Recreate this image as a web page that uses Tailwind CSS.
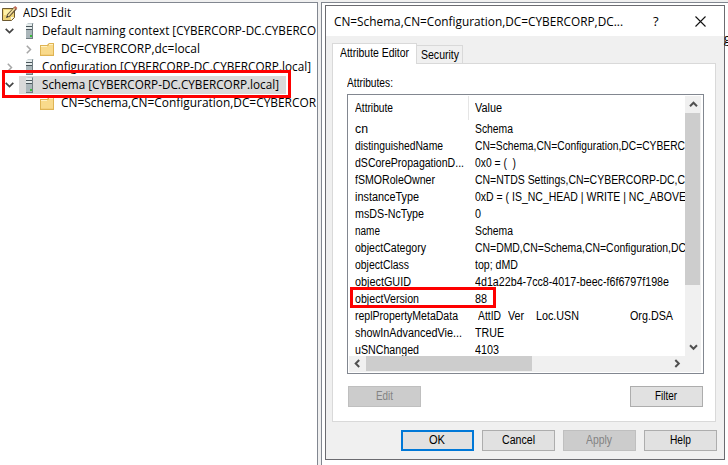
<!DOCTYPE html>
<html lang="en"><head><meta charset="utf-8"><title>ADSI Edit</title>
<script src="https://cdn.jsdelivr.net/npm/@tailwindcss/browser@4"></script></head>
<body class="w-[728px] h-[465px] overflow-hidden bg-[#f0f0f0] text-black relative font-['Liberation_Sans',sans-serif] text-[12px] leading-[17px]">
<svg class="hidden"><defs>
<symbol id="server" viewBox="0 0 10 16"><path fill="#c3cdd0" d="M1 2l2-2h6L8 1v14H1z"/><path fill="#aab6ba" d="M1 1h6v14H1z"/><path fill="#4b565b" d="M1 3h6v1H1zM1 6h6v1H1z"/><path fill="#e5ecec" d="M1 1h6v2H1zM1 4h6v2H1z"/><path fill="#717e83" d="M7 1l1-1v15H7zM1 15h7v1H1z"/><path fill="#37bd39" d="M5 12h2v2H5z"/></symbol>
<symbol id="folder" viewBox="0 0 14 13"><path fill="#dfb454" d="M0 2h7l2-2h5v13H0z"/><path fill="#f9da8b" d="M1 3h7l1-1h4v10H1z"/><path fill="#fff1c4" d="M9 1h4v1H9zM1 3h6v1H1z"/><path fill="#f4cf7c" d="M1 11h12v1H1z"/></symbol>
<symbol id="down" viewBox="0 0 9 6"><path d="M.7.8l3.8 3.7L8.3.8" fill="none" stroke="#444" stroke-width="1.7"/></symbol>
<symbol id="right" viewBox="0 0 6 9"><path d="M.8.7l3.7 3.8L.8 8.3" fill="none" stroke="#a6a6a6" stroke-width="1.5"/></symbol>
</defs></svg>
<div class="flex h-full pt-[2px]">
<aside data-family="Open Sans" class="w-[318px] shrink-0 bg-white border-t border-r border-[#828790] overflow-hidden pt-px font-['Open_Sans','Noto_Sans',sans-serif] leading-[18px]">
  <div class="h-[18px] flex items-center pl-[2px]"><svg class="w-4 h-[15px] mr-[5px] shrink-0" viewBox="0 0 16 15"><path fill="#efd477" stroke="#6c5930" d="M.5 2.5h12v9l-3 3h-9z"/><path fill="#fff2a8" d="M2 4h8v5H2z"/><path fill="#f9f9e9" d="M9 14v-3h3z"/><path stroke="#5f4d32" stroke-width="3.4" d="M6 10l7.5-8"/><path stroke="#f2df9b" stroke-width="1.8" d="M6 10l7-8"/><path stroke="#c06957" stroke-width="3" d="M12.8 2.6L14.3 1"/><path fill="#333" d="M4 12l1-3 2 2z"/></svg><span data-w="48">ADSI Edit</span></div>
  <div class="h-[18px] flex items-center pl-[5px]"><svg class="w-[9px] h-[6px] mr-[11px] shrink-0"><use href="#down"/></svg><svg class="w-[10px] h-4 mr-[7px] shrink-0"><use href="#server"/></svg><span data-w="274">Default naming context [CYBERCORP-DC.CYBERCO</span></div>
  <div class="h-[18px] flex items-center pl-[26px]"><svg class="w-[6px] h-[9px] mr-2 shrink-0"><use href="#right"/></svg><svg class="w-[14px] h-[13px] mr-[7px] shrink-0"><use href="#folder"/></svg><span data-w="139">DC=CYBERCORP,dc=local</span></div>
  <div class="h-[18px] flex items-center pl-[7px]"><svg class="w-[6px] h-[9px] mr-3 shrink-0"><use href="#right"/></svg><svg class="w-[10px] h-4 mr-[7px] shrink-0"><use href="#server"/></svg><span data-w="269">Configuration [CYBERCORP-DC.CYBERCORP.local]</span></div>
  <div class="h-[18px] flex items-center pl-[5px] bg-[linear-gradient(to_right,white_19px,#d9d9d9_19px,#d9d9d9_286px,white_286px)]"><svg class="w-[9px] h-[6px] mr-[11px] shrink-0"><use href="#down"/></svg><svg class="w-[10px] h-4 mr-[7px] shrink-0"><use href="#server"/></svg><span data-w="237">Schema [CYBERCORP-DC.CYBERCORP.local]</span></div>
  <div class="h-[18px] flex items-center pl-[40px]"><svg class="w-[14px] h-[13px] mr-[7px] shrink-0"><use href="#folder"/></svg><span data-w="255">CN=Schema,CN=Configuration,DC=CYBERCOR</span></div>
</aside>
<div class="ml-[3px] grow bg-white border-t border-l border-[#828790] pl-[3px] pt-[2px] flex items-start overflow-hidden">
<main class="w-[400px] h-[455px] shrink-0 border border-[#6b6b70] bg-[#f0f0f0]">
  <header data-family="Open Sans" class="h-[30px] bg-white flex items-center pl-2 font-['Open_Sans','Noto_Sans',sans-serif]"><span data-w="289">CN=Schema,CN=Configuration,DC=CYBERCORP,DC...</span><span class="ml-[30px] text-[13px] w-[6px]">?</span><svg class="w-[11px] h-[11px] ml-[36px]" viewBox="0 0 11 11"><path d="M.5.5l10 10m0-10l-10 10" fill="none" stroke="#111" stroke-width="1.1"/></svg></header>
  <div class="pl-[6px] pt-[7px]">
    <div class="flex items-end h-[20px]"><div class="relative z-10 w-[85px] h-[21px] -mb-px bg-white border border-b-0 border-[#d9d9d9] pl-[7px] pt-px"><span data-w="69">Attribute Editor</span></div><div class="w-[46px] h-[18px] border border-l-0 border-b-0 border-[#d9d9d9] pl-[4px] pt-px"><span data-w="38">Security</span></div></div>
    <section class="w-[384px] h-[359px] bg-white border border-[#d9d9d9] pl-[14px] pt-[11px]">
      <div class="h-[19px]"><span data-w="46">Attributes:</span></div>
      <div class="w-[357px] h-[280px] border border-[#828790] p-px pr-[2px] flex flex-col">
        <div class="flex h-[260px]">
          <div class="w-[337px] overflow-hidden">
            <div class="h-[25px] flex items-center"><div class="w-[120px] h-[24px] self-start border-r border-[#e5e5e5] pl-[6px] pt-[4px]"><span data-w="38">Attribute</span></div><div class="pl-[6px]"><span data-w="27">Value</span></div></div>
            <div id="rows"></div>
          </div>
          <div class="w-[16px] bg-[#f0f0f0]"><div class="h-[17px] flex items-center justify-center"><svg class="w-[9px] h-[7px]" viewBox="0 0 9 7"><path d="M1 5.2l3.5-3.5L8 5.2" fill="none" stroke="#505050" stroke-width="2"/></svg></div><div class="w-[15px] h-[172px] bg-[#cdcdcd]"></div><div class="h-[71px] flex items-end justify-center pb-[5px]"><svg class="w-[9px] h-[7px]" viewBox="0 0 9 7"><path d="M1 1.3l3.5 3.5L8 1.3" fill="none" stroke="#505050" stroke-width="2"/></svg></div></div>
        </div>
        <div class="h-[16px] bg-[#f0f0f0] flex"><div class="w-[17px] h-[15px] flex items-center justify-center"><svg class="w-[7px] h-[9px]" viewBox="0 0 7 9"><path d="M5.2 1L1.7 4.5 5.2 8" fill="none" stroke="#505050" stroke-width="2"/></svg></div><div class="w-[166px] h-[15px] bg-[#cdcdcd]"></div><div class="ml-auto w-[27px] mr-[13px] h-[15px] flex items-center pl-[13px]"><svg class="w-[7px] h-[9px]" viewBox="0 0 7 9"><path d="M1.3 1l3.5 3.5L1.3 8" fill="none" stroke="#505050" stroke-width="2"/></svg></div></div>
      </div>
      <div class="mt-[12px] ml-px w-[355px] flex justify-between"><div class="w-[73px] h-[21px] border border-[#bfbfbf] bg-[#ccc] text-[#838383] flex items-center justify-center"><span data-w="17">Edit</span></div><div class="w-[73px] h-[21px] border border-[#adadad] bg-[#e1e1e1] flex items-center justify-center"><span data-w="22">Filter</span></div></div>
    </section>
    <div class="mt-[8px] ml-[69px] flex gap-2"><div class="w-[73px] h-[21px] border-2 border-[#0078d7] bg-[#e1e1e1] flex items-center justify-center"><span data-w="16">OK</span></div><div class="w-[73px] h-[21px] border border-[#adadad] bg-[#e1e1e1] flex items-center justify-center"><span data-w="33">Cancel</span></div><div class="w-[73px] h-[21px] border border-[#bfbfbf] bg-[#ccc] text-[#838383] flex items-center justify-center"><span data-w="26">Apply</span></div><div class="w-[73px] h-[21px] border border-[#adadad] bg-[#e1e1e1] flex items-center justify-center"><span data-w="21">Help</span></div></div>
  </div>
</main><span class="mt-[25px] -ml-px font-['Open_Sans',sans-serif]">g</span>
</div></div>
<div class="absolute left-[2px] top-[70px] w-[289px] h-[28px] border-3 border-[#fe0000]"></div>
<div class="absolute left-[350px] top-[287px] w-[146px] h-[21px] border-3 border-[#fe0000]"></div>
<script>
const data=[["cn",13,"Schema",38],["distinguishedName",88,"CN=Schema,CN=Configuration,DC=CYBERC",210],["dSCorePropagationD...",109,"0x0 = (\u00a0 )",41],["fSMORoleOwner",80,"CN=NTDS Settings,CN=CYBERCORP-DC,C",210],["instanceType",64,"0xD = ( IS_NC_HEAD | WRITE | NC_ABOVE",211],["msDS-NcType",69,"0",6],["name",25,"Schema",38],["objectCategory",71,"CN=DMD,CN=Schema,CN=Configuration,DC",211],["objectClass",54,"top; dMD",43],["objectGUID",56,"4d1a22b4-7cc8-4017-beec-f6f6797f198e",194],["objectVersion",64,"88",12],["replPropertyMetaData",103,["AttID",23,"Ver",16,"Loc.USN",43,"Org.DSA",43],0],["showInAdvancedVie...",107,"TRUE",29],["uSNChanged",64,"4103",24]];
const text=(s,w)=>`<span data-w="${w}">${s}</span>`;
document.getElementById('rows').innerHTML=data.map(([a,aw,b,bw])=>`<div class="h-[17px] flex"><div class="w-[126px] shrink-0 pl-[6px]">${text(a,aw)}</div>${Array.isArray(b)?`<div class="flex"><div class="w-[33px] pl-[3px]">${text(b[0],b[1])}</div><div class="w-[28px]">${text(b[2],b[3])}</div><div class="w-[94px]">${text(b[4],b[5])}</div><div>${text(b[6],b[7])}</div></div>`:text(b,bw)}</div>`).join('');
// Scale each label horizontally to its nominal width
const ctx=document.createElement('canvas').getContext('2d');
document.querySelectorAll('[data-w]').forEach(e=>{
  const f=e.closest('[data-family]');
  ctx.font=`12px "${f?f.dataset.family:'Liberation Sans'}"`;
  const n=ctx.measureText(e.textContent).width,w=+e.dataset.w;
  Object.assign(e.style,{display:'inline-block',whiteSpace:'nowrap',flexShrink:'0',transformOrigin:'0 50%',transform:`scaleX(${w/n})`,marginRight:(w-n)+'px'});
});
</script>
</body></html>
